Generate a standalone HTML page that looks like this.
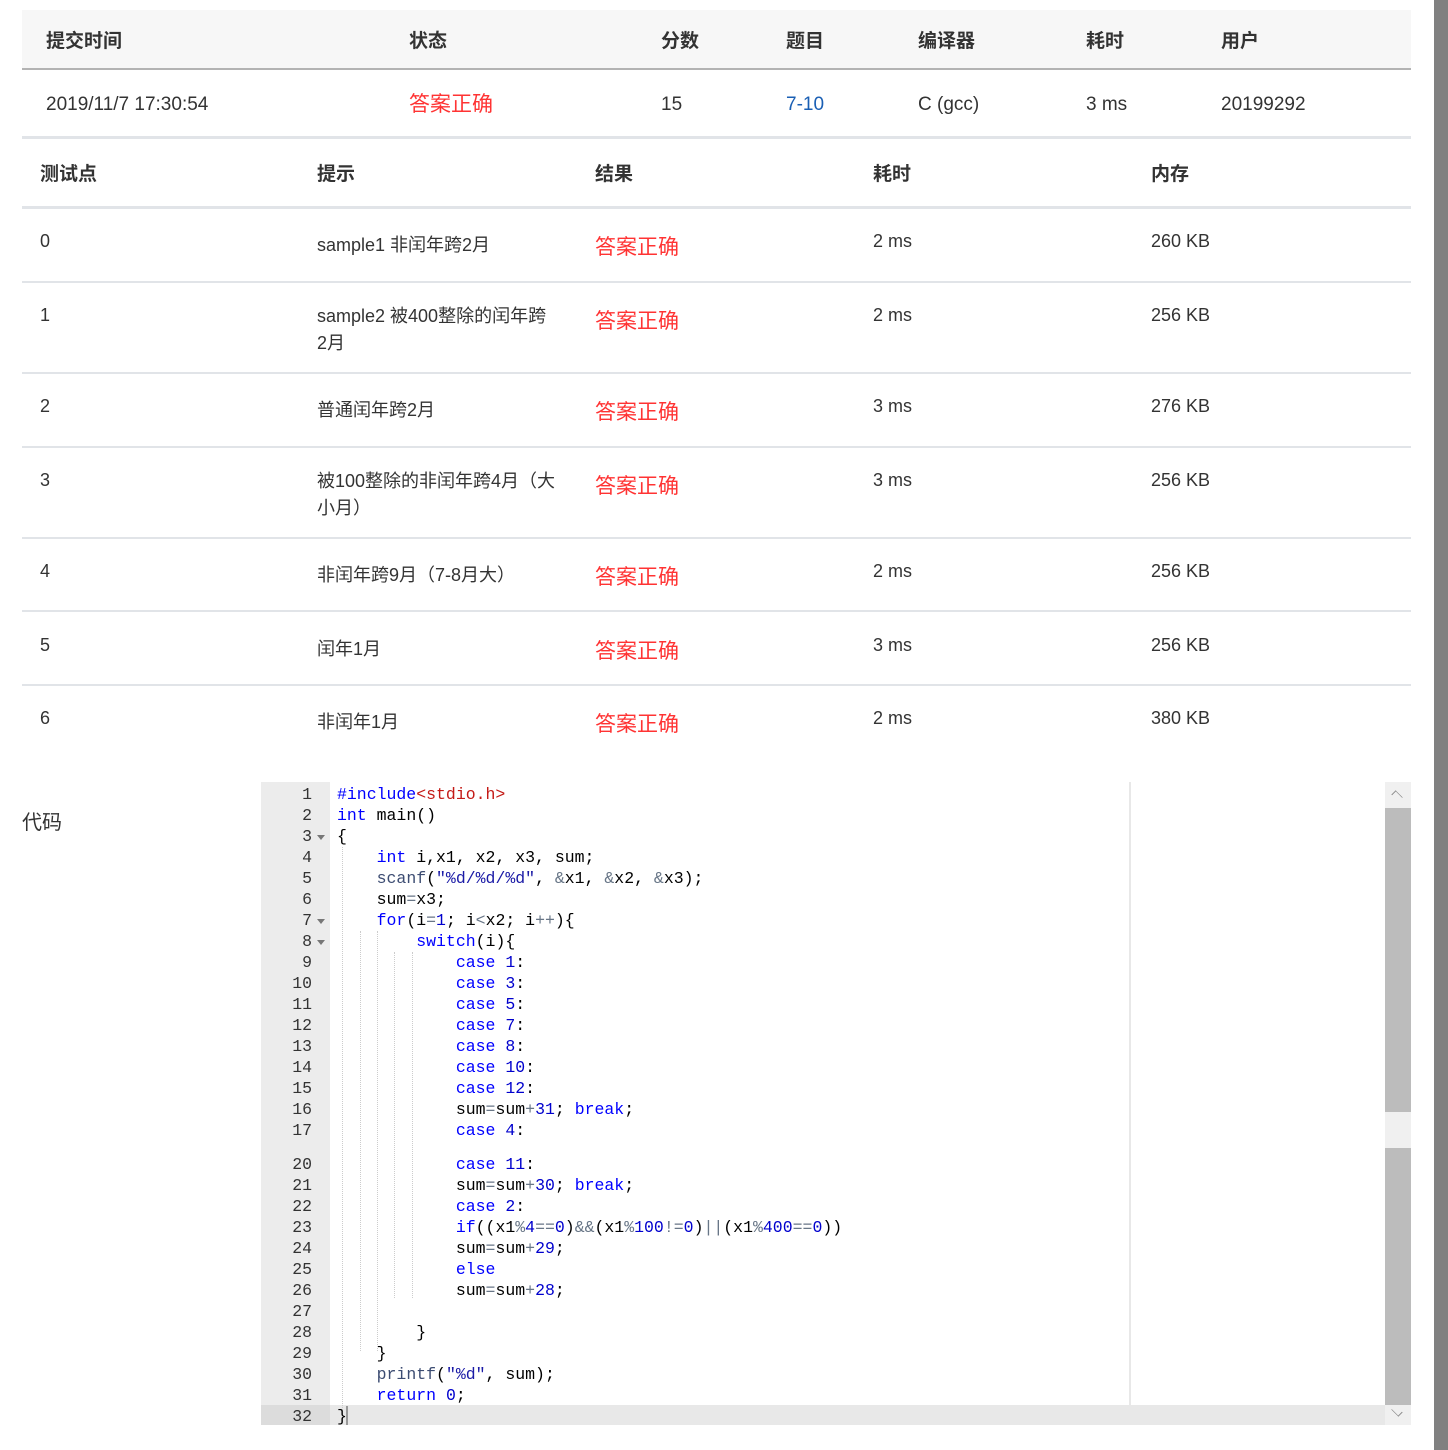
<!DOCTYPE html>
<html><head><meta charset="utf-8"><style>
body{margin:0;width:1448px;height:1450px;background:#fff;position:relative;overflow:hidden;font-family:"Liberation Sans","Noto Sans CJK SC",sans-serif;color:#333}
.a{position:absolute;white-space:nowrap}
.h{font-weight:bold;font-size:19px;color:#333;margin-top:-2px}
.t{font-size:18px;color:#333;margin-top:2px}
.r{font-size:21px;color:#f33}
.ln{position:absolute;left:0;height:2px;background:#e1e4e8;width:1389px;left:22px}
#code{position:absolute;left:261px;top:782px;width:1150px;height:643px;overflow:hidden;font-family:"Liberation Mono",monospace;font-size:16.5px}
.gut{position:absolute;left:0;top:0;width:69px;height:643px;background:#ececec}
.row{position:relative;height:21px;line-height:21px}
.row .n{position:absolute;left:0;width:51px;text-align:right;color:#333}
.row .c{position:absolute;left:76px;color:#000;white-space:pre}
.k{color:#0000ff}.num{color:#0000cd}.s{color:#1a1aa6}.o{color:#687687}.f{color:#3c4c72}.red{color:#c41a16}
.fa{position:absolute;left:56px;top:9px;width:0;height:0;border-left:4px solid transparent;border-right:4px solid transparent;border-top:5px solid #777}
.g{position:absolute;width:0;border-left:1px dotted #ccc}
</style></head><body>
<div class="a" style="left:22px;top:10px;width:1389px;height:58px;background:#f7f7f7"></div>
<div class="a" style="left:22px;top:68px;width:1389px;height:2px;background:#b3b3b3"></div>
<div class="a h" style="left:46px;top:28px">提交时间</div>
<div class="a h" style="left:409px;top:28px">状态</div>
<div class="a h" style="left:661px;top:28px">分数</div>
<div class="a h" style="left:786px;top:28px">题目</div>
<div class="a h" style="left:918px;top:28px">编译器</div>
<div class="a h" style="left:1086px;top:28px">耗时</div>
<div class="a h" style="left:1221px;top:28px">用户</div>
<div class="a t" style="left:46px;top:92px;font-size:19px">2019/11/7 17:30:54</div>
<div class="a r" style="left:409px;top:88px">答案正确</div>
<div class="a t" style="left:661px;top:92px;font-size:19px">15</div>
<div class="a t" style="left:786px;top:92px;font-size:19px;color:#1a5fb4">7-10</div>
<div class="a t" style="left:918px;top:92px;font-size:19px">C (gcc)</div>
<div class="a t" style="left:1086px;top:92px;font-size:19px">3 ms</div>
<div class="a t" style="left:1221px;top:92px;font-size:19px">20199292</div>
<div class="ln" style="top:136px;height:3px"></div>
<div class="a h" style="left:40px;top:161px">测试点</div>
<div class="a h" style="left:317px;top:161px">提示</div>
<div class="a h" style="left:595px;top:161px">结果</div>
<div class="a h" style="left:873px;top:161px">耗时</div>
<div class="a h" style="left:1151px;top:161px">内存</div>
<div class="ln" style="top:206px;height:3px"></div>

<div class="a t" style="left:40px;top:229px">0</div><div class="a t" style="left:317px;top:229px">sample1 非闰年跨2月</div><div class="a r" style="left:595px;top:231px">答案正确</div><div class="a t" style="left:873px;top:229px">2 ms</div><div class="a t" style="left:1151px;top:229px">260 KB</div>
<div class="ln" style="top:281px"></div>
<div class="a t" style="left:40px;top:303px">1</div><div class="a t" style="left:317px;top:301px;line-height:27px">sample2 被400整除的闰年跨<br>2月</div><div class="a r" style="left:595px;top:305px">答案正确</div><div class="a t" style="left:873px;top:303px">2 ms</div><div class="a t" style="left:1151px;top:303px">256 KB</div>
<div class="ln" style="top:372px"></div>
<div class="a t" style="left:40px;top:394px">2</div><div class="a t" style="left:317px;top:394px">普通闰年跨2月</div><div class="a r" style="left:595px;top:396px">答案正确</div><div class="a t" style="left:873px;top:394px">3 ms</div><div class="a t" style="left:1151px;top:394px">276 KB</div>
<div class="ln" style="top:446px"></div>
<div class="a t" style="left:40px;top:468px">3</div><div class="a t" style="left:317px;top:466px;line-height:27px">被100整除的非闰年跨4月（大<br>小月）</div><div class="a r" style="left:595px;top:470px">答案正确</div><div class="a t" style="left:873px;top:468px">3 ms</div><div class="a t" style="left:1151px;top:468px">256 KB</div>
<div class="ln" style="top:537px"></div>
<div class="a t" style="left:40px;top:559px">4</div><div class="a t" style="left:317px;top:559px">非闰年跨9月（7-8月大）</div><div class="a r" style="left:595px;top:561px">答案正确</div><div class="a t" style="left:873px;top:559px">2 ms</div><div class="a t" style="left:1151px;top:559px">256 KB</div>
<div class="ln" style="top:610px"></div>
<div class="a t" style="left:40px;top:633px">5</div><div class="a t" style="left:317px;top:633px">闰年1月</div><div class="a r" style="left:595px;top:635px">答案正确</div><div class="a t" style="left:873px;top:633px">3 ms</div><div class="a t" style="left:1151px;top:633px">256 KB</div>
<div class="ln" style="top:684px"></div>
<div class="a t" style="left:40px;top:706px">6</div><div class="a t" style="left:317px;top:706px">非闰年1月</div><div class="a r" style="left:595px;top:708px">答案正确</div><div class="a t" style="left:873px;top:706px">2 ms</div><div class="a t" style="left:1151px;top:706px">380 KB</div>

<div class="a" style="left:22px;top:806px;font-size:20px;color:#333">代码</div>

<div id="code">
<div class="gut"></div>
<div class="a" style="left:0;top:623px;width:1124px;height:20px;background:#e8e8e8"></div>
<div class="a" style="left:0;top:623px;width:69px;height:20px;background:#dcdcdc"></div>
<div class="a" style="left:868px;top:0;width:2px;height:643px;background:#e8e8e8"></div>
<div class="g" style="left:81px;top:65px;height:567px"></div>
<div class="g" style="left:99px;top:149px;height:420px"></div>
<div class="g" style="left:116px;top:149px;height:420px"></div>
<div class="g" style="left:133px;top:170px;height:346px"></div>
<div class="g" style="left:151px;top:170px;height:346px"></div>
<div style="position:absolute;left:0;top:2px;width:1124px">
<div class="row"><span class="n">1</span><span class="c"><span class="k">#include</span><span class="red">&lt;stdio.h&gt;</span></span></div>
<div class="row"><span class="n">2</span><span class="c"><span class="k">int</span> main()</span></div>
<div class="row"><span class="n">3</span><i class="fa"></i><span class="c">{</span></div>
<div class="row"><span class="n">4</span><span class="c">    <span class="k">int</span> i,x1, x2, x3, sum;</span></div>
<div class="row"><span class="n">5</span><span class="c">    <span class="f">scanf</span>(<span class="s">"%d/%d/%d"</span>, <span class="o">&amp;</span>x1, <span class="o">&amp;</span>x2, <span class="o">&amp;</span>x3);</span></div>
<div class="row"><span class="n">6</span><span class="c">    sum<span class="o">=</span>x3;</span></div>
<div class="row"><span class="n">7</span><i class="fa"></i><span class="c">    <span class="k">for</span>(i<span class="o">=</span><span class="num">1</span>; i<span class="o">&lt;</span>x2; i<span class="o">++</span>){</span></div>
<div class="row"><span class="n">8</span><i class="fa"></i><span class="c">        <span class="k">switch</span>(i){</span></div>
<div class="row"><span class="n">9</span><span class="c">            <span class="k">case</span> <span class="num">1</span>:</span></div>
<div class="row"><span class="n">10</span><span class="c">            <span class="k">case</span> <span class="num">3</span>:</span></div>
<div class="row"><span class="n">11</span><span class="c">            <span class="k">case</span> <span class="num">5</span>:</span></div>
<div class="row"><span class="n">12</span><span class="c">            <span class="k">case</span> <span class="num">7</span>:</span></div>
<div class="row"><span class="n">13</span><span class="c">            <span class="k">case</span> <span class="num">8</span>:</span></div>
<div class="row"><span class="n">14</span><span class="c">            <span class="k">case</span> <span class="num">10</span>:</span></div>
<div class="row"><span class="n">15</span><span class="c">            <span class="k">case</span> <span class="num">12</span>:</span></div>
<div class="row"><span class="n">16</span><span class="c">            sum<span class="o">=</span>sum<span class="o">+</span><span class="num">31</span>; <span class="k">break</span>;</span></div>
<div class="row"><span class="n">17</span><span class="c">            <span class="k">case</span> <span class="num">4</span>:</span></div>
<div style="position:relative;height:13px;overflow:hidden"><div class="row" style="top:9px"><span class="n">18</span><span class="c">            <span class="k">case</span> <span class="num">6</span>:</span></div></div>
<div class="row"><span class="n">20</span><span class="c">            <span class="k">case</span> <span class="num">11</span>:</span></div>
<div class="row"><span class="n">21</span><span class="c">            sum<span class="o">=</span>sum<span class="o">+</span><span class="num">30</span>; <span class="k">break</span>;</span></div>
<div class="row"><span class="n">22</span><span class="c">            <span class="k">case</span> <span class="num">2</span>:</span></div>
<div class="row"><span class="n">23</span><span class="c">            <span class="k">if</span>((x1<span class="o">%</span><span class="num">4</span><span class="o">==</span><span class="num">0</span>)<span class="o">&amp;&amp;</span>(x1<span class="o">%</span><span class="num">100</span><span class="o">!=</span><span class="num">0</span>)<span class="o">||</span>(x1<span class="o">%</span><span class="num">400</span><span class="o">==</span><span class="num">0</span>))</span></div>
<div class="row"><span class="n">24</span><span class="c">            sum<span class="o">=</span>sum<span class="o">+</span><span class="num">29</span>;</span></div>
<div class="row"><span class="n">25</span><span class="c">            <span class="k">else</span></span></div>
<div class="row"><span class="n">26</span><span class="c">            sum<span class="o">=</span>sum<span class="o">+</span><span class="num">28</span>;</span></div>
<div class="row"><span class="n">27</span><span class="c"> </span></div>
<div class="row"><span class="n">28</span><span class="c">        }</span></div>
<div class="row"><span class="n">29</span><span class="c">    }</span></div>
<div class="row"><span class="n">30</span><span class="c">    <span class="f">printf</span>(<span class="s">"%d"</span>, sum);</span></div>
<div class="row"><span class="n">31</span><span class="c">    <span class="k">return</span> <span class="num">0</span>;</span></div>
<div class="row"><span class="n">32</span><span class="c">}</span></div>
</div>
<div class="a" style="left:85px;top:624px;width:2px;height:19px;background:#999"></div>
<div class="a" style="left:1124px;top:0;width:26px;height:643px;background:#f0f0f0"></div>
<div class="a" style="left:1124px;top:26px;width:26px;height:304px;background:#bcbcbc"></div>
<div class="a" style="left:1124px;top:366px;width:26px;height:257px;background:#bcbcbc"></div>
<div class="a" style="left:1131px;top:9px;width:9px;height:9px;border-left:1px solid #888;border-top:1px solid #888;transform:rotate(45deg) scaleY(.6)"></div>
<div class="a" style="left:1131px;top:624px;width:9px;height:9px;border-right:1px solid #888;border-bottom:1px solid #888;transform:rotate(45deg) scaleY(.6)"></div>
</div>
<div class="a" style="left:1434px;top:0;width:14px;height:1450px;background:#808080"></div>
</body></html>
